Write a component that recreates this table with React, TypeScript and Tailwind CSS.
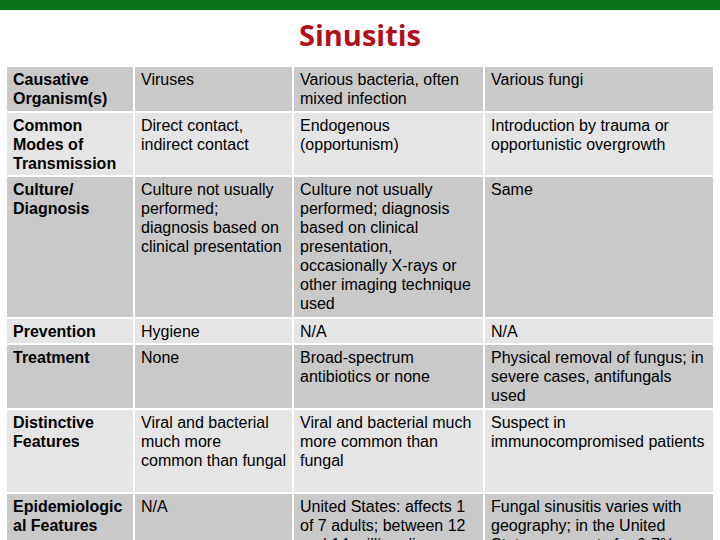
import React from "react";

type Row = { h: string; dark: boolean; cells: string[][] };

const rows: Row[] = [
  {
    h: "h-[44px]",
    dark: true,
    cells: [
      ["Causative", "Organism(s)"],
      ["Viruses"],
      ["Various bacteria, often", "mixed infection"],
      ["Various fungi"],
    ],
  },
  {
    h: "h-[62px]",
    dark: false,
    cells: [
      ["Common", "Modes of", "Transmission"],
      ["Direct contact,", "indirect contact"],
      ["Endogenous", "(opportunism)"],
      ["Introduction by trauma or", "opportunistic overgrowth"],
    ],
  },
  {
    h: "h-[140px]",
    dark: true,
    cells: [
      ["Culture/", "Diagnosis"],
      ["Culture not usually", "performed;", "diagnosis based on", "clinical presentation"],
      [
        "Culture not usually",
        "performed; diagnosis",
        "based on clinical",
        "presentation,",
        "occasionally X-rays or",
        "other imaging technique",
        "used",
      ],
      ["Same"],
    ],
  },
  {
    h: "h-[24px]",
    dark: false,
    cells: [["Prevention"], ["Hygiene"], ["N/A"], ["N/A"]],
  },
  {
    h: "h-[63px]",
    dark: true,
    cells: [
      ["Treatment"],
      ["None"],
      ["Broad-spectrum", "antibiotics or none"],
      ["Physical removal of fungus; in", "severe cases, antifungals", "used"],
    ],
  },
  {
    h: "h-[82px]",
    dark: false,
    cells: [
      ["Distinctive", "Features"],
      ["Viral and bacterial", "much more", "common than fungal"],
      ["Viral and bacterial much", "more common than", "fungal"],
      ["Suspect in", "immunocompromised patients"],
    ],
  },
  {
    h: "h-[80px]",
    dark: true,
    cells: [
      ["Epidemiologic", "al Features"],
      ["N/A"],
      ["United States: affects 1", "of 7 adults; between 12", "and 14 million diagnoses"],
      ["Fungal sinusitis varies with", "geography; in the United", "States, accounts for 6-7%"],
    ],
  },
];

export default function App() {
  return (
    <div className="w-[720px] h-[540px] overflow-hidden bg-white">
      <div className="h-[10px] bg-[#0b7417]" />
      <div className="h-[57px] pt-[10px] flex justify-center">
        <div
          className="text-[29px] leading-[29px] font-bold text-[#b0101a]"
          style={{ fontFamily: '"Open Sans", "Noto Sans", sans-serif' }}
        >
          Sinusitis
        </div>
      </div>
      <div
        className="ml-[7px] grid grid-cols-[126px_157px_189px_228px] gap-x-[2px] gap-y-[2px] text-[16px] leading-[19px] text-black"
        style={{ fontFamily: '"Liberation Sans", Arial, sans-serif' }}
      >
        {rows.map((r, ri) =>
          r.cells.map((c, ci) => (
            <div
              key={`${ri}-${ci}`}
              className={`${r.h} ${r.dark ? "bg-[#c9c9c9]" : "bg-[#e5e5e5]"} pl-[6px] pt-[3px] whitespace-nowrap ${
                ci === 0 ? "font-bold" : ""
              }`}
            >
              {c.map((line, li) => (
                <div key={li}>{line}</div>
              ))}
            </div>
          ))
        )}
      </div>
    </div>
  );
}
